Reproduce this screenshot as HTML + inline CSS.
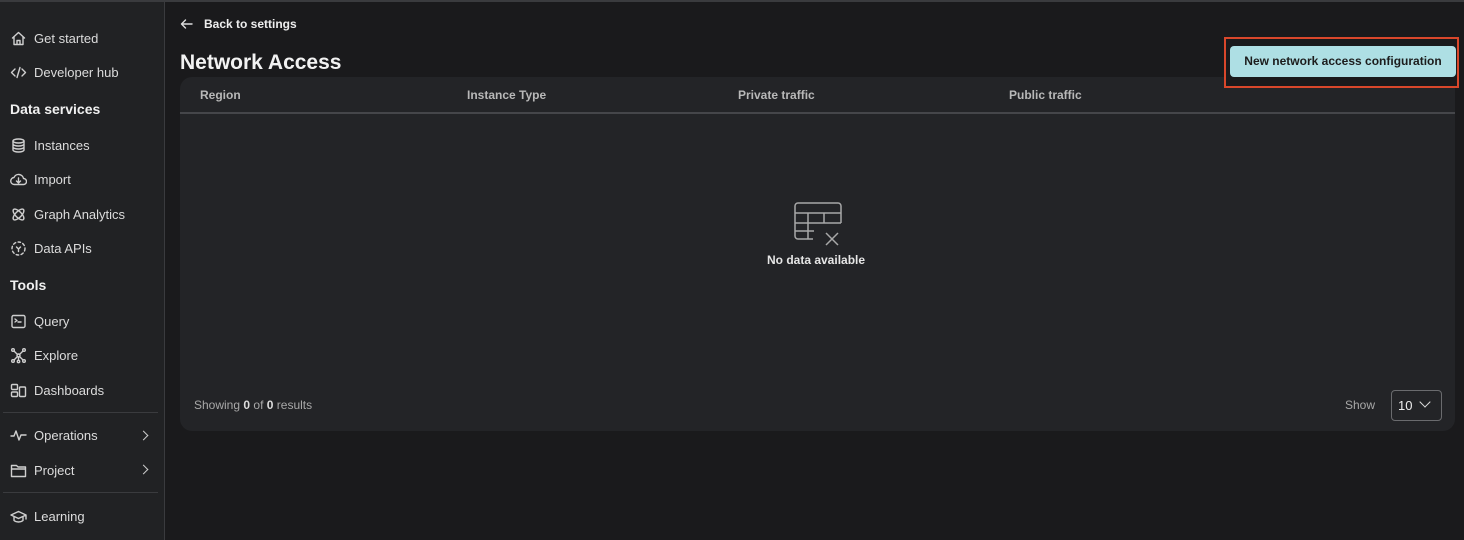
<!DOCTYPE html>
<html><head><meta charset="utf-8"><style>
*{box-sizing:border-box;margin:0;padding:0}
body{width:1464px;height:540px;background:#1a1a1c;font-family:"Liberation Sans",sans-serif;color:#e6e6e6;position:relative;overflow:hidden}
.top{position:absolute;left:0;top:0;width:1464px;height:2px;background:#3a3b3e}
.side{position:absolute;left:0;top:2px;width:165px;height:538px;background:#212224;border-right:1px solid #3a3b3e}
.it{position:absolute;left:10px;font-size:13px;color:#dcdcdc;display:flex;align-items:center;height:20px}
.it svg{width:17px;height:17px;margin-right:7px;stroke:#cfcfcf;fill:none;stroke-width:1.4;stroke-linecap:round;stroke-linejoin:round}
.hd{position:absolute;left:10px;font-size:14px;font-weight:bold;color:#f0f0f0}
.sep{position:absolute;left:3px;width:155px;height:1px;background:#3a3b3e}
.chev{position:absolute;left:140px;width:7px;height:7px;border-right:1.5px solid #ccc;border-top:1.5px solid #ccc;transform:rotate(45deg)}
.card{position:absolute;left:180px;top:77px;width:1275px;height:354px;background:#232427;border-radius:12px}
.th{position:absolute;top:88px;font-size:12px;font-weight:bold;color:#b8b8b8}
</style></head><body>
<div class="top"></div>
<div class="side">
<div class="it" style="top:26px"><svg viewBox="0 0 17 17"><path d="M2.5 8 8.5 2.5 14.5 8M4 6.8V14.5h9V6.8M7 14.5v-4h3v4"/></svg>Get started</div>
<div class="it" style="top:60px"><svg viewBox="0 0 17 17"><path d="M5 5 1.5 8.5 5 12M12 5l3.5 3.5L12 12M10 3.5 7 13.5"/></svg>Developer hub</div>
<div class="hd" style="top:99px">Data services</div>
<div class="it" style="top:133px"><svg viewBox="0 0 17 17"><ellipse cx="8.5" cy="4" rx="5.5" ry="2"/><path d="M3 4v9c0 1.1 2.5 2 5.5 2s5.5-.9 5.5-2V4M3 7c0 1.1 2.5 2 5.5 2S14 8.1 14 7M3 10c0 1.1 2.5 2 5.5 2s5.5-.9 5.5-2"/></svg>Instances</div>
<div class="it" style="top:167px"><svg viewBox="0 0 17 17"><path d="M4.5 13.5a3.5 3.5 0 0 1-.5-7 5 5 0 0 1 9.5 1 3 3 0 0 1 0 6H4.5zM8.5 7v5M6.5 10l2 2 2-2"/></svg>Import</div>
<div class="it" style="top:202px"><svg viewBox="0 0 17 17"><ellipse cx="8.5" cy="8.5" rx="7" ry="3" transform="rotate(45 8.5 8.5)"/><ellipse cx="8.5" cy="8.5" rx="7" ry="3" transform="rotate(-45 8.5 8.5)"/></svg>Graph Analytics</div>
<div class="it" style="top:236px"><svg viewBox="0 0 17 17" stroke-dasharray="2.5 2.5"><circle cx="8.5" cy="8.5" r="6.5"/><path d="M6.5 7l2 2 2-2M8.5 9v2.5" stroke-dasharray="none"/></svg>Data APIs</div>
<div class="hd" style="top:275px">Tools</div>
<div class="it" style="top:309px"><svg viewBox="0 0 17 17"><rect x="2" y="2.5" width="13" height="12" rx="1.5"/><path d="M5 6l2 1.5L5 9M8 9h3"/></svg>Query</div>
<div class="it" style="top:343px"><svg viewBox="0 0 17 17"><circle cx="3" cy="3" r="1.3"/><circle cx="14" cy="3" r="1.3"/><circle cx="3" cy="14" r="1.3"/><circle cx="14" cy="14" r="1.3"/><circle cx="8.5" cy="8.5" r="1.5"/><circle cx="8.5" cy="14.5" r="1.2"/><path d="M4 4l3.5 3.5M13 4 9.5 7.5M4 13l3.5-3.5M13 13 9.5 9.5M8.5 10v3.3"/></svg>Explore</div>
<div class="it" style="top:378px"><svg viewBox="0 0 17 17"><rect x="1.5" y="2.5" width="6" height="5" rx="1"/><rect x="1.5" y="10" width="6" height="4.5" rx="1"/><rect x="9.5" y="5" width="6" height="9.5" rx="1"/></svg>Dashboards</div>
<div class="sep" style="top:410px"></div>
<div class="it" style="top:423px"><svg viewBox="0 0 17 17"><path d="M1 9h3l2-5 3 9 2-5h5"/></svg>Operations</div>
<div class="chev" style="top:430px"></div>
<div class="it" style="top:458px"><svg viewBox="0 0 17 17"><path d="M1.5 3.5h5l1.5 1.5h7.5v9.5h-14zM1.5 7h14"/></svg>Project</div>
<div class="chev" style="top:464px"></div>
<div class="sep" style="top:490px"></div>
<div class="it" style="top:504px"><svg viewBox="0 0 17 17"><path d="M1 7l7.5-3.5L16 7l-7.5 3.5zM4 8.5v4c2.5 2 6.5 2 9 0v-4M16 7v4"/></svg>Learning</div>
</div>

<div style="position:absolute;left:180px;top:17px;font-size:12px;font-weight:bold;color:#eee;display:flex;align-items:center"><svg width="13" height="12" viewBox="0 0 13 12" style="margin-right:11px" fill="none" stroke="#ddd" stroke-width="1.4" stroke-linecap="round" stroke-linejoin="round"><path d="M12 6H1.5M5.5 2 1.5 6l4 4"/></svg>Back to settings</div>
<div style="position:absolute;left:180px;top:51px;font-size:21px;font-weight:bold;color:#f2f2f2">Network Access</div>

<div class="card"></div>
<div style="position:absolute;left:180px;top:112px;width:1275px;height:1.5px;background:#45464a"></div>
<div class="th" style="left:200px">Region</div>
<div class="th" style="left:467px">Instance Type</div>
<div class="th" style="left:738px">Private traffic</div>
<div class="th" style="left:1009px">Public traffic</div>

<div style="position:absolute;left:1224px;top:37px;width:235px;height:51px;border:2px solid #d9472b;background:#1a1a1c"></div>
<div style="position:absolute;left:1230px;top:46px;width:226px;height:31px;background:#aedfe4;border-radius:4px;color:#1c1c1c;font-size:12px;font-weight:bold;text-align:center;line-height:31px">New network access configuration</div>

<svg style="position:absolute;left:792px;top:202px" width="50" height="46" viewBox="0 0 50 46" fill="none" stroke="#a8a8a8" stroke-width="1.5"><path d="M21 37H6a3 3 0 0 1-3-3V4a3 3 0 0 1 3-3h40a3 3 0 0 1 3 3v17M3 11h46M3 21h46M3 29h19M16 11v26M32 11v10M34 31l12 12M46 31 34 43"/></svg>
<div style="position:absolute;left:767px;top:253px;font-size:12px;font-weight:bold;color:#e6e6e6">No data available</div>

<div style="position:absolute;left:194px;top:398px;font-size:12px;color:#a8a8a8">Showing <b style="color:#ddd">0</b> of <b style="color:#ddd">0</b> results</div>
<div style="position:absolute;left:1345px;top:398px;font-size:12px;color:#a8a8a8">Show</div>
<div style="position:absolute;left:1391px;top:390px;width:51px;height:31px;border:1px solid #6a6b6e;border-radius:4px;font-size:13px;color:#eee;padding:7px 0 0 6px">10</div>
<div style="position:absolute;left:1421px;top:398px;width:8px;height:8px;border-right:1.5px solid #ddd;border-bottom:1.5px solid #ddd;transform:rotate(45deg)"></div>
</body></html>
